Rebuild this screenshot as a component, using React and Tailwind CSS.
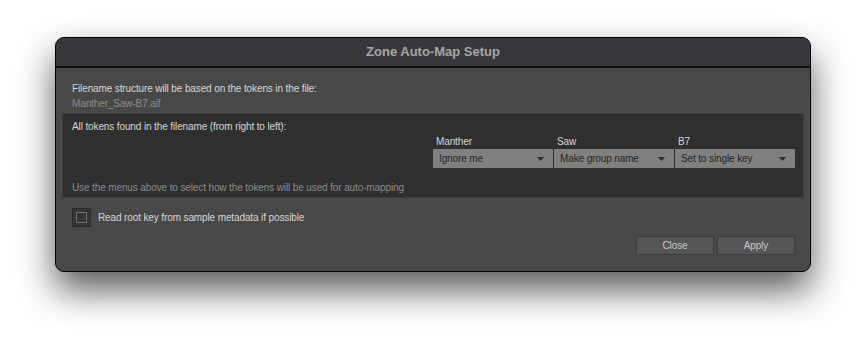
import React, { useState } from "react";

// ===== Small dropdown (token role selector) =====
const TokenSelect = ({ label, value }) => (
  <div className="flex flex-col w-[120px]">
    <div className="h-[15px] leading-[16px] pl-[3px] text-[#d6d6d6]">{label}</div>
    <div className="h-[19px] bg-[#808080] flex items-center justify-between pl-[6px] pr-[9px] text-[#262626]">
      <span>{value}</span>
      <svg width="7" height="4" viewBox="0 0 7 4">
        <path d="M0 0 H7 L3.5 4 Z" fill="#2e2e2e" />
      </svg>
    </div>
  </div>
);

const Button = ({ children }) => (
  <button className="w-[78px] h-[19px] bg-[#555555] border border-[#3d3d3d] text-[#c9c9c9] flex items-center justify-center leading-none">
    {children}
  </button>
);

// ===== Main Component =====
export default function App() {
  const [readRoot, setReadRoot] = useState(false);

  return (
    <div
      className="w-[866px] h-[345px] bg-white pl-[55px] pt-[37px] overflow-hidden"
      style={{ fontFamily: '"Liberation Sans", Arial, sans-serif' }}
    >
      <div className="w-[756px] h-[235px] rounded-[9px] border border-black bg-[#484848] overflow-hidden flex flex-col shadow-[0_18px_36px_rgba(0,0,0,0.65)]">
        {/* Title bar */}
        <div className="h-[30px] shrink-0 bg-[#38373c] border-b-2 border-[#111] flex items-center justify-center">
          <span className="text-[13px] font-bold text-[#a6a6a6]">Zone Auto-Map Setup</span>
        </div>

        {/* Body */}
        <div className="flex-1 flex flex-col px-[6px] text-[10px] leading-[15px] tracking-[-0.12px]">
          <div className="pt-[13px] pl-[10px]">
            <div className="text-[#d6d6d6]">Filename structure will be based on the tokens in the file:</div>
            <div className="text-[#8c8c8c]">Manther_Saw-B7.aif</div>
          </div>

          {/* Tokens panel */}
          <div className="mt-[2px] h-[85px] bg-[#2f2f2f] border border-[#3d3d3d] pl-[9px] pr-[8px] pt-[5px] flex flex-col">
            <div className="text-[#d6d6d6]">All tokens found in the filename (from right to left):</div>
            <div className="flex justify-end gap-[1px]">
              <TokenSelect label="Manther" value="Ignore me" />
              <TokenSelect label="Saw" value="Make group name" />
              <TokenSelect label="B7" value="Set to single key" />
            </div>
            <div className="mt-[12px] text-[#8c8c8c]">Use the menus above to select how the tokens will be used for auto-mapping</div>
          </div>

          {/* Checkbox */}
          <div className="mt-[10px] pl-[10px] flex items-center gap-[7px]">
            <div
              className="w-[19px] h-[19px] bg-[#353535] border border-[#2a2a2a] flex items-center justify-center cursor-pointer"
              onClick={() => setReadRoot(!readRoot)}
            >
              <div className={`w-[11px] h-[11px] border border-[#6e6e6e] ${readRoot ? "bg-[#9a9a9a]" : ""}`}></div>
            </div>
            <span className="text-[#d6d6d6]">Read root key from sample metadata if possible</span>
          </div>

          {/* Buttons */}
          <div className="mt-[9px] flex justify-end gap-[3px] pr-[9px]">
            <Button>Close</Button>
            <Button>Apply</Button>
          </div>
        </div>
      </div>
    </div>
  );
}
